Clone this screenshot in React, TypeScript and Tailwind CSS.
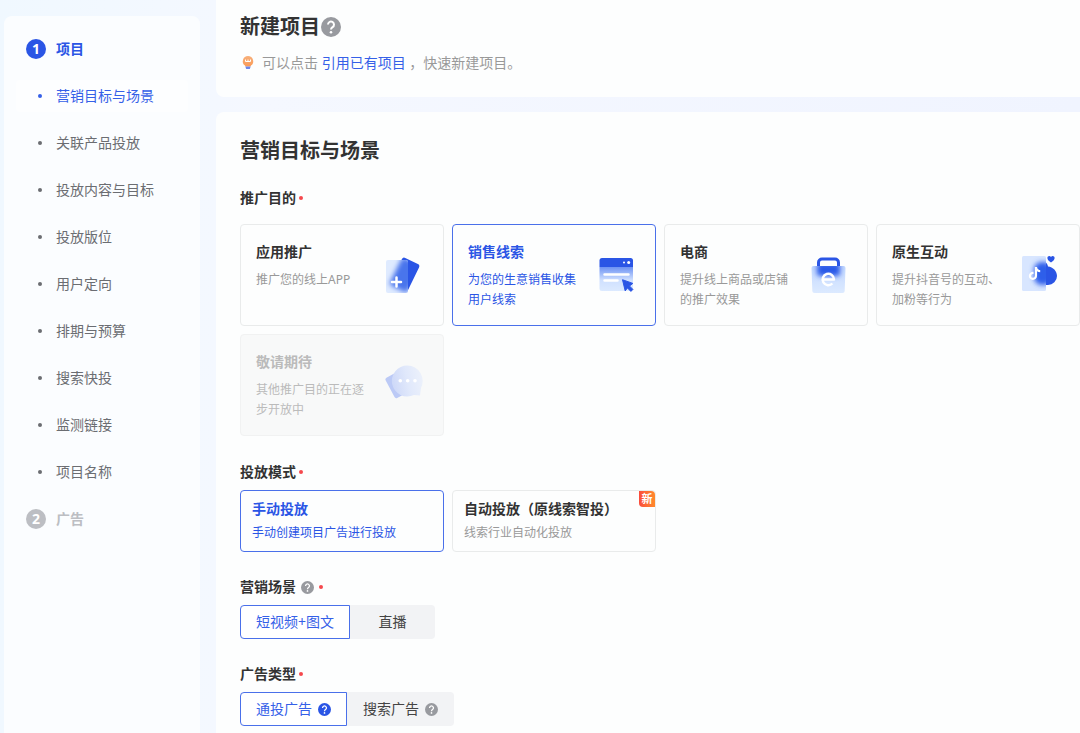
import { useState } from "react";
import type { ReactNode } from "react";
import { clsx } from "clsx";
import { FaTiktok } from "react-icons/fa6";

const NAV_ITEMS = [
  "营销目标与场景",
  "关联产品投放",
  "投放内容与目标",
  "投放版位",
  "用户定向",
  "排期与预算",
  "搜索快投",
  "监测链接",
  "项目名称",
];

interface Purpose {
  id: string;
  title: string;
  desc: string;
  icon: ReactNode;
  disabled?: boolean;
}

// ── Illustrations ───────────────────────────────────────────────────────────

function AppIcon() {
  return (
    <svg viewBox="0 0 48 48" className="size-12 shrink-0" aria-hidden="true">
      <defs>
        <clipPath id="app-pane">
          <rect x="6" y="9" width="22" height="33" rx="2" />
        </clipPath>
        <filter id="app-blur" x="-50%" y="-50%" width="200%" height="200%">
          <feGaussianBlur stdDeviation="2.4" />
        </filter>
      </defs>
      <rect x="15.5" y="8.5" width="19" height="30" rx="2.5" transform="rotate(26 25 23.5)" fill="#2a55e5" />
      <g clipPath="url(#app-pane)">
        <rect x="6" y="9" width="22" height="33" fill="#dfebff" />
        <rect x="15" y="8.5" width="20" height="31" rx="3" transform="rotate(26 25 23.5)" fill="#4a74ec" filter="url(#app-blur)" />
      </g>
      <path d="M16.500 26.500v9M12 31h9" stroke="#fff" strokeWidth="2.500" strokeLinecap="round" />
    </svg>
  );
}

function LeadsIcon() {
  return (
    <svg viewBox="0 0 48 48" className="size-12 shrink-0" aria-hidden="true">
      <defs>
        <linearGradient id="leads-body" x1="0" y1="0" x2="0" y2="1">
          <stop offset="0" stopColor="#6d92f3" />
          <stop offset="0.55" stopColor="#cfe0ff" />
          <stop offset="1" stopColor="#dceaff" />
        </linearGradient>
      </defs>
      <path d="M7.500 16h33.500v21.500a2.500 2.500 0 0 1-2.500 2.500h-28.500a2.500 2.500 0 0 1-2.500-2.500z" fill="url(#leads-body)" />
      <path d="M7.500 16V9.500a2.500 2.500 0 0 1 2.500-2.500h28.500a2.500 2.500 0 0 1 2.500 2.500V16z" fill="#2a55e5" />
      <circle cx="32" cy="11.500" r="1" fill="#fff" />
      <circle cx="36.700" cy="11.500" r="1.500" fill="#fff" />
      <path d="M12.500 23.500h24M12.500 29.500h13" stroke="#fff" strokeWidth="2.500" strokeLinecap="round" />
      <path
        d="M30.500 28.700l10.300 3.700-3.300 2.600 3.400 3.400-2 2-3.500-3.500-2.200 3z"
        fill="#2a55e5"
        stroke="#2a55e5"
        strokeWidth="1"
        strokeLinejoin="round"
      />
    </svg>
  );
}

function ShopIcon() {
  return (
    <svg viewBox="0 0 48 48" className="size-12 shrink-0" aria-hidden="true">
      <defs>
        <linearGradient id="shop-body" x1="0" y1="0" x2="0" y2="1">
          <stop offset="0" stopColor="#c3d8ff" />
          <stop offset="1" stopColor="#dceaff" />
        </linearGradient>
        <clipPath id="shop-bag">
          <path d="M9.500 15h30a2 2 0 0 1 2 2l-.800 22.500a2.500 2.500 0 0 1-2.500 2.500h-27.400a2.500 2.500 0 0 1-2.500-2.500l-.800-22.500a2 2 0 0 1 2-2z" />
        </clipPath>
        <filter id="shop-blur" x="-50%" y="-50%" width="200%" height="200%">
          <feGaussianBlur stdDeviation="2.600" />
        </filter>
      </defs>
      <path d="M14.500 20v-8.500a3.500 3.500 0 0 1 3.500-3.500h13a3.500 3.500 0 0 1 3.500 3.500V20" fill="none" stroke="#2a55e5" strokeWidth="3" />
      <g clipPath="url(#shop-bag)">
        <rect x="7" y="15" width="35" height="27" fill="url(#shop-body)" />
        <rect x="13" y="12" width="23" height="13" rx="3" fill="#2a5ae8" filter="url(#shop-blur)" />
      </g>
      <path d="M18.500 28.500h11.500a5.700 5.700 0 1 0-1.600 4" fill="none" stroke="#fff" strokeWidth="2.500" strokeLinejoin="round" />
    </svg>
  );
}

function NativeIcon() {
  return (
    <svg viewBox="0 0 48 48" className="size-12 shrink-0" aria-hidden="true">
      <defs>
        <clipPath id="native-pane">
          <rect x="6" y="5" width="24" height="35" rx="1.500" />
        </clipPath>
        <filter id="native-blur" x="-50%" y="-50%" width="200%" height="200%">
          <feGaussianBlur stdDeviation="2.400" />
        </filter>
      </defs>
      <path d="M22 10c5-2 9 1 10 5.500c5 .500 9 4.500 9 9.500a9 9 0 0 1-9 9h-10z" fill="#2a55e5" />
      <g clipPath="url(#native-pane)">
        <rect x="6" y="5" width="24" height="35" fill="#d8e6ff" />
        <rect x="18" y="11" width="18" height="23" rx="8" fill="#2f5fea" filter="url(#native-blur)" />
      </g>
      <path d="M35 11.500c-2.600-1.700-3.600-3-3.600-4.500 0-2 2.600-2.600 3.600-.900 1-1.700 3.600-1.100 3.600.900 0 1.500-1 2.800-3.600 4.500z" fill="#2a55e5" />
      <FaTiktok x="12" y="16" size="13" color="#fff" />
    </svg>
  );
}

function ComingIcon() {
  return (
    <svg viewBox="0 0 48 48" className="size-12 shrink-0" aria-hidden="true">
      <defs>
        <linearGradient id="coming-bubble" x1="0" y1="0.600" x2="1" y2="0.400">
          <stop offset="0" stopColor="#cdd8f8" />
          <stop offset="0.500" stopColor="#e0e8fb" />
          <stop offset="1" stopColor="#ecf1fb" />
        </linearGradient>
      </defs>
      <rect x="9" y="12" width="18" height="23" rx="2" transform="rotate(-28 18 23.500)" fill="#bccaf6" />
      <path d="M27.500 4.500a15.500 15.500 0 0 1 13.500 22.500l-1 7.500-6-.500A15.500 15.500 0 1 1 27.500 4.500z" fill="url(#coming-bubble)" />
      <circle cx="20.300" cy="19.700" r="1.800" fill="#fff" />
      <circle cx="27.700" cy="19.700" r="1.800" fill="#fff" />
      <circle cx="35" cy="19.700" r="1.800" fill="#fff" />
    </svg>
  );
}

function BulbIcon() {
  return (
    <svg viewBox="0 0 16 16" className="size-4 shrink-0" aria-hidden="true">
      <defs>
        <linearGradient id="bulb" x1="0" y1="0" x2="0" y2="1">
          <stop offset="0" stopColor="#f7b07c" />
          <stop offset="1" stopColor="#fb9a55" />
        </linearGradient>
      </defs>
      <path d="M8 1a5.300 5.300 0 0 1 3 9.600l-.500 1h-5l-.500-1A5.300 5.300 0 0 1 8 1z" fill="url(#bulb)" />
      <path d="M5.500 4.500v2h5v-2M8 4.500v2" fill="none" stroke="#fff" strokeWidth="1" />
      <path d="M5.300 11.500h5.400l-.900 2.500H6.200z" fill="#6d86e8" />
    </svg>
  );
}

function HelpIcon({ className }: { className?: string }) {
  return (
    <svg viewBox="0 0 20 20" className={clsx("shrink-0", className)} aria-hidden="true">
      <circle cx="10" cy="10" r="10" fill="currentColor" />
      <path d="M7 7.600a3 3 0 1 1 4.600 2.500c-1 .700-1.600 1.100-1.600 2.500" fill="none" stroke="#fff" strokeWidth="2" />
      <circle cx="10" cy="15.200" r="1.300" fill="#fff" />
    </svg>
  );
}

const PURPOSES: Purpose[] = [
  { id: "app", title: "应用推广", desc: "推广您的线上APP", icon: <AppIcon /> },
  { id: "leads", title: "销售线索", desc: "为您的生意销售收集用户线索", icon: <LeadsIcon /> },
  { id: "shop", title: "电商", desc: "提升线上商品或店铺的推广效果", icon: <ShopIcon /> },
  { id: "native", title: "原生互动", desc: "提升抖音号的互动、加粉等行为", icon: <NativeIcon /> },
  { id: "coming", title: "敬请期待", desc: "其他推广目的正在逐步开放中", icon: <ComingIcon />, disabled: true },
];

const MODES = [
  { id: "manual", title: "手动投放", desc: "手动创建项目广告进行投放", isNew: false },
  { id: "auto", title: "自动投放（原线索智投）", desc: "线索行业自动化投放", isNew: true },
];

const SCENES = [
  { id: "video", label: "短视频+图文" },
  { id: "live", label: "直播" },
];

const AD_TYPES = [
  { id: "feed", label: "通投广告", help: true },
  { id: "search", label: "搜索广告", help: true },
];

// ── Form pieces ─────────────────────────────────────────────────────────────

function FieldLabel({ children, help = false }: { children: ReactNode; help?: boolean }) {
  return (
    <legend className="flex items-center gap-[3px] text-sm leading-5 font-bold text-[#333]">
      {children}
      {help && <HelpIcon className="mx-0.5 size-[13px] text-[#989a9f]" />}
      <span className="size-1 rounded-full bg-[#f5484d]" />
    </legend>
  );
}

interface SegmentsProps {
  name: string;
  options: { id: string; label: string; help?: boolean }[];
  value: string;
  onChange: (id: string) => void;
}

function Segments({ name, options, value, onChange }: SegmentsProps) {
  return (
    <div className="mt-2 inline-flex rounded bg-[#f2f3f5]">
      {options.map((o) => {
        const active = o.id === value;
        return (
          <label
            key={o.id}
            className={clsx(
              "relative flex h-[34px] min-w-[85px] cursor-pointer items-center justify-center gap-1.5 border px-[15px] text-sm first:rounded-l last:rounded-r",
              active ? "border-[#4a70ea] bg-white text-[#3560e8]" : "border-transparent text-[#444]",
            )}
          >
            <input
              type="radio"
              name={name}
              className="sr-only"
              checked={active}
              onChange={() => onChange(o.id)}
            />
            {o.label}
            {o.help && (
              <HelpIcon className={clsx("size-[13px]", active ? "text-[#2a55e5]" : "text-[#989a9f]")} />
            )}
          </label>
        );
      })}
    </div>
  );
}

export default function App() {
  const [section, setSection] = useState(NAV_ITEMS[0]);
  const [purpose, setPurpose] = useState("leads");
  const [mode, setMode] = useState("manual");
  const [scene, setScene] = useState("video");
  const [adType, setAdType] = useState("feed");

  return (
    <div className="flex min-h-screen gap-4 bg-linear-to-r from-[#f0f8ff] via-[#f5f8ff] via-25% to-[#f0f4ff] pl-1 font-['Noto_Sans','Noto_Sans_CJK_SC',sans-serif]">
      {/* Step navigation */}
      <nav className="mt-4 flex w-[196px] shrink-0 flex-col gap-[15px] rounded-t-lg bg-[#fbfdff] pt-[17px] pb-4">
        <a href="#project" className="flex h-8 items-center gap-2.5 pl-[22px] text-sm font-bold text-[#2a55e5]">
          <span className="flex size-5 items-center justify-center rounded-full bg-[#2a55e5] text-white">1</span>
          项目
        </a>
        {NAV_ITEMS.map((item) => (
          <a
            key={item}
            href={`#${item}`}
            onClick={() => setSection(item)}
            className={clsx(
              "mx-3 flex h-8 items-center gap-3.5 rounded pl-[22px] text-sm",
              item === section ? "bg-[#fdfeff] text-[#3560e8]" : "text-[#6b6d72]",
            )}
          >
            <span className="size-1 rounded-full bg-current" />
            {item}
          </a>
        ))}
        <a href="#ad" className="flex h-8 items-center gap-2.5 pl-[22px] text-sm font-bold text-[#bcbec3]">
          <span className="flex size-5 items-center justify-center rounded-full bg-[#bcbec3] text-white">2</span>
          广告
        </a>
      </nav>

      <main className="flex min-w-0 flex-1 flex-col gap-[15px]">
        <header className="rounded-bl-lg bg-[#fdfefe] pt-[13px] pb-6 pl-6">
          <h1 className="flex items-center gap-px text-xl leading-7 font-bold text-[#333]">
            新建项目
            <HelpIcon className="size-5 text-[#989a9f]" />
          </h1>
          <div className="mt-3 flex items-center gap-1.5 text-sm leading-5 text-[#999]">
            <BulbIcon />
            <p>
              可以点击{" "}
              <a href="#reuse" className="text-[#3560e8]">
                引用已有项目
              </a>{" "}
              ，快速新建项目。
            </p>
          </div>
        </header>

        <form className="flex-1 rounded-tl-lg bg-[#fdfefe] pt-[25px] pb-2 pl-6">
          <h2 className="text-xl leading-7 font-bold text-[#333]">营销目标与场景</h2>

          <fieldset className="mt-[23px]">
            <FieldLabel>推广目的</FieldLabel>
            <div className="mt-4 grid grid-cols-[repeat(auto-fill,minmax(204px,1fr))] gap-2">
              {PURPOSES.map((p) => {
                const active = p.id === purpose;
                return (
                  <label
                    key={p.id}
                    className={clsx(
                      "relative flex items-center gap-2 rounded border p-[15px]",
                      active && "border-[#4a70ea] text-[#2a55e5]",
                      p.disabled && "border-[#f1f2f2] bg-[#f8f9f9] text-[#bbb]",
                      !active && !p.disabled && "border-[#e9ebeb] text-[#333]",
                    )}
                  >
                    <input
                      type="radio"
                      name="purpose"
                      className="sr-only"
                      checked={active}
                      disabled={p.disabled}
                      onChange={() => setPurpose(p.id)}
                    />
                    <span className="flex-1 self-start pt-0.5">
                      <span className="block text-sm leading-5 font-bold">{p.title}</span>
                      <span
                        className={clsx(
                          "mt-2 block min-h-10 text-xs leading-5",
                          !active && !p.disabled && "text-[#999]",
                        )}
                      >
                        {p.desc}
                      </span>
                    </span>
                    {p.icon}
                  </label>
                );
              })}
            </div>
          </fieldset>

          <fieldset className="mt-[26px]">
            <FieldLabel>投放模式</FieldLabel>
            <div className="mt-2 grid grid-cols-[repeat(auto-fill,minmax(204px,1fr))] gap-2">
              {MODES.map((m) => {
                const active = m.id === mode;
                return (
                  <label
                    key={m.id}
                    className={clsx(
                      "relative rounded border px-[11px] py-2",
                      active ? "border-[#4a70ea] text-[#2a55e5]" : "border-[#e9ebeb] text-[#333]",
                    )}
                  >
                    <input
                      type="radio"
                      name="mode"
                      className="sr-only"
                      checked={active}
                      onChange={() => setMode(m.id)}
                    />
                    <span className="block text-sm leading-5 font-bold">{m.title}</span>
                    <span className={clsx("mt-1 block text-xs leading-5", !active && "text-[#999]")}>
                      {m.desc}
                    </span>
                    {m.isNew && (
                      <span className="absolute top-0 right-0 flex size-4 items-center justify-center rounded-tr rounded-bl bg-linear-to-r from-[#fa4b3c] to-[#ff8a2a] text-[11px] font-bold text-white">
                        新
                      </span>
                    )}
                  </label>
                );
              })}
            </div>
          </fieldset>

          <fieldset className="mt-[25px]">
            <FieldLabel help>营销场景</FieldLabel>
            <Segments name="scene" options={SCENES} value={scene} onChange={setScene} />
          </fieldset>

          <fieldset className="mt-[25px]">
            <FieldLabel>广告类型</FieldLabel>
            <Segments name="ad-type" options={AD_TYPES} value={adType} onChange={setAdType} />
          </fieldset>
        </form>
      </main>
    </div>
  );
}
